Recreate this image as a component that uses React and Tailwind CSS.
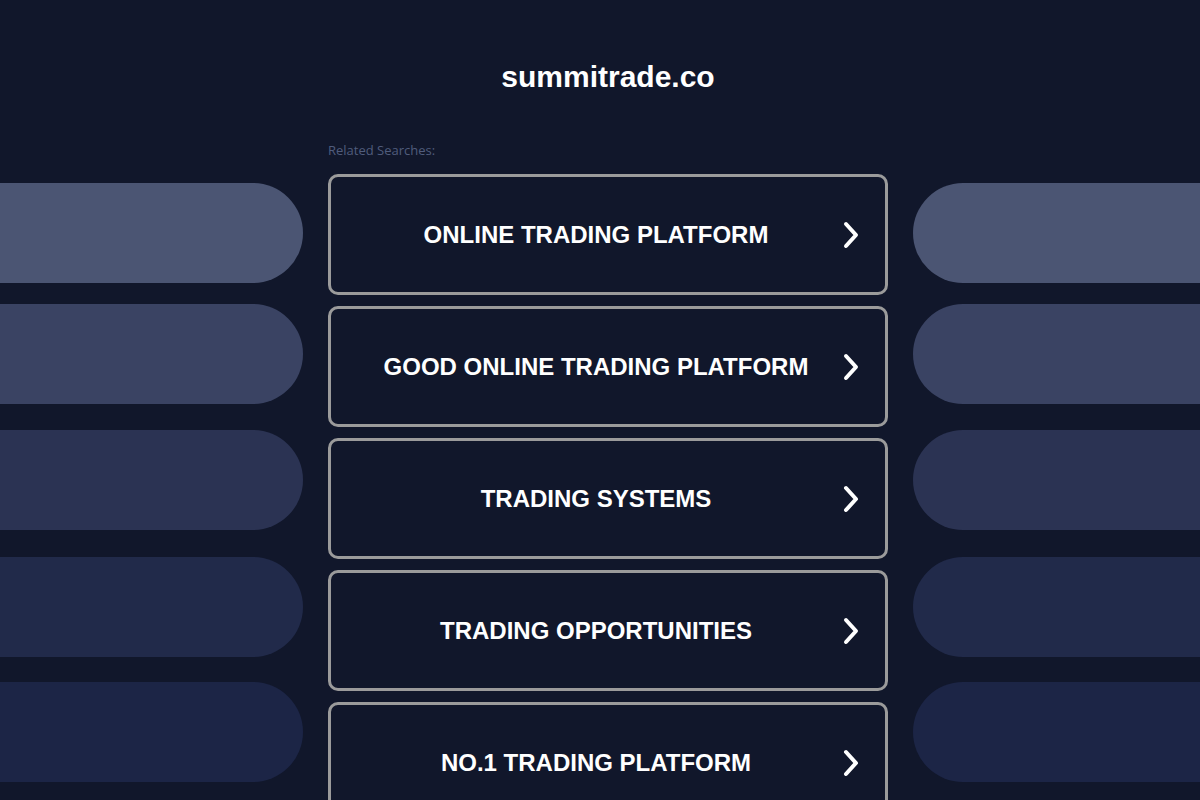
import React from "react";

const items = [
  "ONLINE TRADING PLATFORM",
  "GOOD ONLINE TRADING PLATFORM",
  "TRADING SYSTEMS",
  "TRADING OPPORTUNITIES",
  "NO.1 TRADING PLATFORM",
];

function Chevron() {
  return (
    <svg width="18" height="28" viewBox="0 0 18 28" className="absolute right-[25px] top-1/2 -translate-y-1/2">
      <polyline points="4,3 14,14 4,25" fill="none" stroke="white" strokeWidth="4" strokeLinecap="round" strokeLinejoin="round" />
    </svg>
  );
}

export default function App() {
  return (
    <div className="w-[1200px] h-[800px] overflow-hidden bg-[#11172b] font-['Liberation_Sans',Arial,sans-serif]">
      <div className="h-[130px] flex justify-center pl-[16px] pt-[62px]">
        <h1 className="text-white text-[30px] font-bold leading-[30px]">summitrade.co</h1>
      </div>
      <div className="flex">
        <div className="w-[303px] flex flex-col shrink-0">
          <div className="mt-[53px] h-[100px] rounded-r-[50px] bg-[#4b5573]" />
          <div className="mt-[21px] h-[100px] rounded-r-[50px] bg-[#3a4363]" />
          <div className="mt-[26px] h-[100px] rounded-r-[50px] bg-[#2b3353]" />
          <div className="mt-[27px] h-[100px] rounded-r-[50px] bg-[#212a4a]" />
          <div className="mt-[25px] h-[100px] rounded-r-[50px] bg-[#1c2546]" />
        </div>
        <div className="w-[560px] ml-[25px] shrink-0">
          <div className="h-[44px] text-[13px] font-medium text-[#505c7c] font-['Open_Sans',sans-serif] leading-none pt-[14px]">Related Searches:</div>
          <div className="flex flex-col gap-[11px]">
            {items.map((t) => (
              <div key={t} className="relative h-[121px] rounded-[10px] border-[3px] border-[#9b9b9b] flex items-center justify-center pr-[24px]">
                <span className="text-white text-[24px] font-bold">{t}</span>
                <Chevron />
              </div>
            ))}
          </div>
        </div>
        <div className="flex-1 ml-[25px] flex flex-col">
          <div className="mt-[53px] h-[100px] rounded-l-[50px] bg-[#4b5573]" />
          <div className="mt-[21px] h-[100px] rounded-l-[50px] bg-[#3a4363]" />
          <div className="mt-[26px] h-[100px] rounded-l-[50px] bg-[#2b3353]" />
          <div className="mt-[27px] h-[100px] rounded-l-[50px] bg-[#212a4a]" />
          <div className="mt-[25px] h-[100px] rounded-l-[50px] bg-[#1c2546]" />
        </div>
      </div>
    </div>
  );
}
